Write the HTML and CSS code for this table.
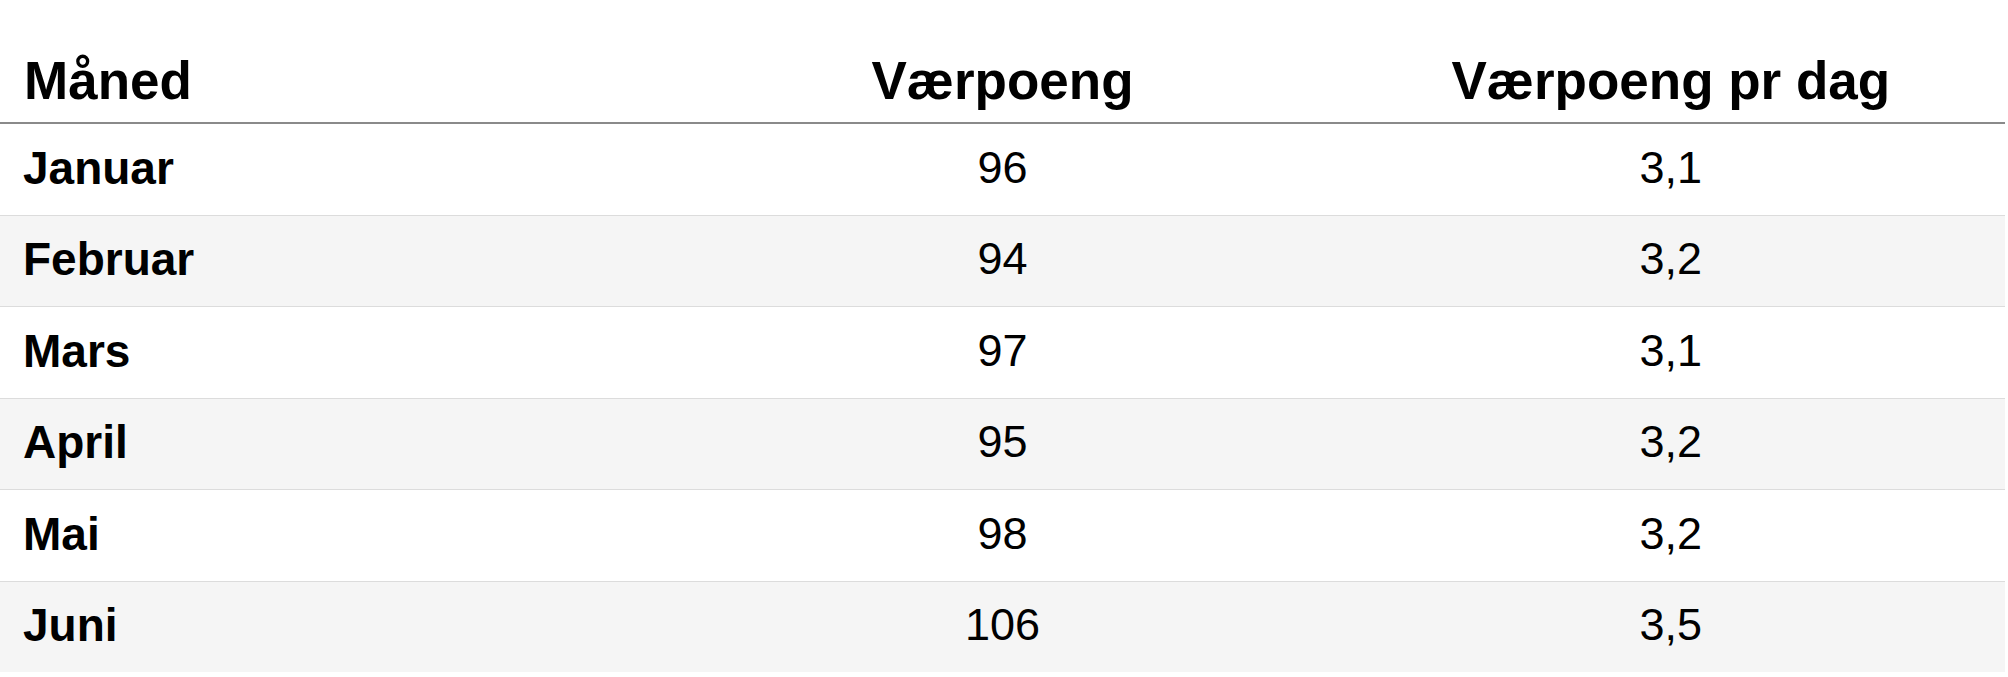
FILE: index.html
```html
<!DOCTYPE html>
<html lang="no">
<head>
<meta charset="utf-8">
<link rel="stylesheet" href="styles.css">
</head>
<body>
<table class="data">
  <thead>
    <tr>
      <th class="c-month">Måned</th>
      <th class="c-num">Værpoeng</th>
      <th class="c-num">Værpoeng pr dag</th>
    </tr>
  </thead>
  <tbody>
    <tr><td class="c-month">Januar</td><td class="c-num">96</td><td class="c-num">3,1</td></tr>
    <tr><td class="c-month">Februar</td><td class="c-num">94</td><td class="c-num">3,2</td></tr>
    <tr><td class="c-month">Mars</td><td class="c-num">97</td><td class="c-num">3,1</td></tr>
    <tr><td class="c-month">April</td><td class="c-num">95</td><td class="c-num">3,2</td></tr>
    <tr><td class="c-month">Mai</td><td class="c-num">98</td><td class="c-num">3,2</td></tr>
    <tr><td class="c-month">Juni</td><td class="c-num">106</td><td class="c-num">3,5</td></tr>
  </tbody>
</table>
</body>
</html>
```

FILE: styles.css
```css
html, body {
  margin: 0;
  padding: 0;
  background: #ffffff;
}

body {
  font-family: "Liberation Sans", Arial, sans-serif;
  color: #000;
}

.data {
  width: 2005px;
  border-collapse: collapse;
  table-layout: fixed;
}

.data th {
  font-size: 53px;
  font-weight: 700;
  line-height: 61px;
  padding: 50px 24px 11px 24px;
  border-bottom: 2px solid #8a8a8a;
  text-align: center;
}

.data th.c-month {
  text-align: left;
}

.data td {
  font-size: 45px;
  line-height: 52px;
  padding: 17.75px 23px 20.75px 23px;
  border-bottom: 1px solid #dcdcdc;
  text-align: center;
}

.data td.c-month {
  text-align: left;
  font-weight: 700;
  font-size: 46px;
}

.data tbody tr:nth-child(even) td {
  background: #f5f5f5;
}

.data tbody tr:last-child td {
  border-bottom: none;
}
```
